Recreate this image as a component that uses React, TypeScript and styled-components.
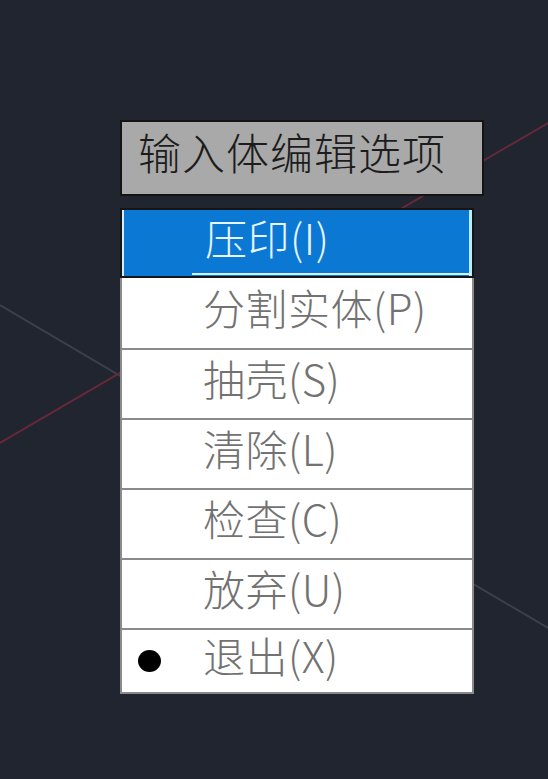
import React from "react";
import styled, { createGlobalStyle } from "styled-components";

const Global = createGlobalStyle`
  html, body {
    margin: 0;
    padding: 0;
    background: #20252f;
  }
  body {
    width: 548px;
    height: 779px;
    overflow: hidden;
  }
`;

const Canvas = styled.div`
  position: relative;
  width: 548px;
  height: 779px;
  background: #20252f;
  overflow: hidden;
`;

const Backdrop = styled.svg`
  position: absolute;
  left: 0;
  top: 0;
  width: 548px;
  height: 779px;
  z-index: 0;
`;

const Stage = styled.div`
  position: relative;
  z-index: 1;
  display: flex;
  flex-direction: column;
  align-items: flex-start;
  gap: 12px;
  padding: 120px 0 0 120px;
  font-family: "Noto Sans CJK SC", "Liberation Sans", sans-serif;
  font-weight: 300;
`;

const Prompt = styled.div`
  box-sizing: border-box;
  width: 364px;
  height: 76px;
  background: #a9a9a9;
  border: 2px solid #141414;
  display: flex;
  align-items: center;
  padding: 0 0 14px 16px;
  font-size: 43px;
  letter-spacing: 1px;
  color: #1c1c1c;
  line-height: 1;
`;

const Menu = styled.div`
  box-sizing: border-box;
  width: 354px;
  display: flex;
  flex-direction: column;
  background: #ffffff;
  border: 2px solid #8a8a8a;
  border-top: none;
`;

const Item = styled.div<{ $selected?: boolean; $first?: boolean; $last?: boolean }>`
  position: relative;
  box-sizing: border-box;
  height: ${(p) => (p.$last ? 64 : 70)}px;
  display: grid;
  grid-template-columns: ${(p) => (p.$selected ? 83 : 81)}px 1fr;
  align-items: center;
  font-size: 42px;
  letter-spacing: 0.5px;
  line-height: 1;
  color: ${(p) => (p.$selected ? "#e6f5ff" : "#727272")};
  background: ${(p) => (p.$selected ? "#0b78d4" : "#ffffff")};
  border-top: ${(p) => (p.$first || p.$selected ? "none" : "2px solid #8a8a8a")};
  ${(p) =>
    p.$selected &&
    `
    margin: 0 -2px;
    border: 2px solid #151515;
    box-shadow: inset 2px 0 0 #d6ecff, inset -3px 0 0 #b8ecff;
  `}
`;

const Marker = styled.div`
  display: flex;
  align-items: center;
  padding-left: 16px;
  height: 100%;
`;

const Bullet = styled.span`
  display: block;
  width: 23px;
  height: 22px;
  border-radius: 50%;
  background: #000;
`;

const Label = styled.span`
  padding-bottom: 12px;
`;

const Focus = styled.span`
  position: absolute;
  left: 70px;
  right: 1px;
  bottom: 1px;
  height: 2px;
  background: #d8f1ff;
`;

const items = [
  { label: "压印(I)", selected: true },
  { label: "分割实体(P)" },
  { label: "抽壳(S)" },
  { label: "清除(L)" },
  { label: "检查(C)" },
  { label: "放弃(U)" },
  { label: "退出(X)", bullet: true },
];

export default function App() {
  return (
    <Canvas>
      <Global />
      <Backdrop viewBox="0 0 548 779">
        <line x1="0" y1="305" x2="548" y2="628" stroke="#3a404d" strokeWidth="2" />
        <line x1="0" y1="443" x2="548" y2="123" stroke="#66293a" strokeWidth="2" />
      </Backdrop>
      <Stage>
        <Prompt>输入体编辑选项</Prompt>
        <Menu>
          {items.map((it, i) => (
            <Item
              key={it.label}
              $selected={it.selected}
              $first={i === 1}
              $last={i === items.length - 1}
            >
              <Marker>{it.bullet && <Bullet />}</Marker>
              <Label>{it.label}</Label>
              {it.selected && <Focus />}
            </Item>
          ))}
        </Menu>
      </Stage>
    </Canvas>
  );
}
